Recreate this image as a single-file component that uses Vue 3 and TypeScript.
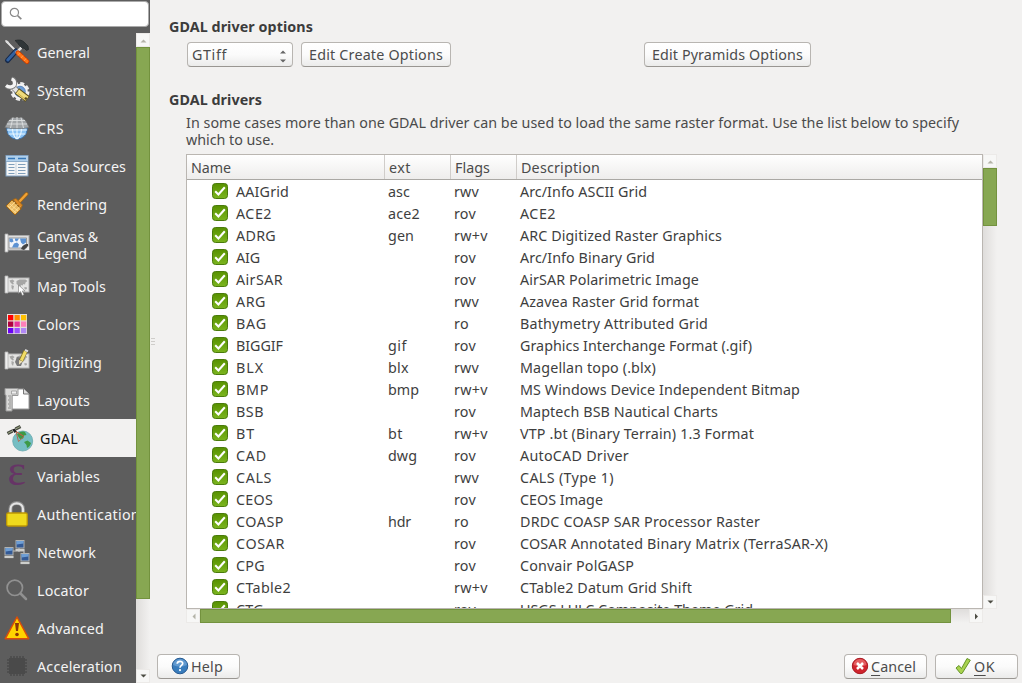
<script setup lang="ts">
import type { Directive } from 'vue'

interface Page { name: string; icon: string; w: number; second?: string; w2?: number }
interface Driver { name: string; w: number; ext: string; flags: string; desc: string; dw: number }

const pages: Page[] = [
  { name: 'General', icon: 'general', w: 53 },
  { name: 'System', icon: 'system', w: 49 },
  { name: 'CRS', icon: 'crs', w: 27 },
  { name: 'Data Sources', icon: 'data', w: 89 },
  { name: 'Rendering', icon: 'render', w: 70 },
  { name: 'Canvas &', icon: 'canvas', w: 61, second: 'Legend', w2: 50 },
  { name: 'Map Tools', icon: 'map', w: 69 },
  { name: 'Colors', icon: 'colors', w: 43 },
  { name: 'Digitizing', icon: 'digit', w: 65 },
  { name: 'Layouts', icon: 'layouts', w: 53 },
  { name: 'GDAL', icon: 'gdal', w: 38 },
  { name: 'Variables', icon: 'vars', w: 63 },
  { name: 'Authentication', icon: 'auth', w: 103 },
  { name: 'Network', icon: 'network', w: 59 },
  { name: 'Locator', icon: 'locator', w: 52 },
  { name: 'Advanced', icon: 'advanced', w: 67 },
  { name: 'Acceleration', icon: 'accel', w: 85 },
]

const d = (name: string, w: number, ext: string, flags: string, desc: string, dw: number): Driver =>
  ({ name, w, ext, flags, desc, dw })

const drivers: Driver[] = [
  d('AAIGrid', 53, 'asc', 'rwv', 'Arc/Info ASCII Grid', 127),
  d('ACE2', 36, 'ace2', 'rov', 'ACE2', 36),
  d('ADRG', 40, 'gen', 'rw+v', 'ARC Digitized Raster Graphics', 202),
  d('AIG', 24, '', 'rov', 'Arc/Info Binary Grid', 135),
  d('AirSAR', 47, '', 'rov', 'AirSAR Polarimetric Image', 179),
  d('ARG', 30, '', 'rwv', 'Azavea Raster Grid format', 179),
  d('BAG', 31, '', 'ro', 'Bathymetry Attributed Grid', 188),
  d('BIGGIF', 47, 'gif', 'rov', 'Graphics Interchange Format (.gif)', 232),
  d('BLX', 28, 'blx', 'rwv', 'Magellan topo (.blx)', 136),
  d('BMP', 33, 'bmp', 'rw+v', 'MS Windows Device Independent Bitmap', 280),
  d('BSB', 28, '', 'rov', 'Maptech BSB Nautical Charts', 198),
  d('BT', 19, 'bt', 'rw+v', 'VTP .bt (Binary Terrain) 1.3 Format', 234),
  d('CAD', 31, 'dwg', 'rov', 'AutoCAD Driver', 109),
  d('CALS', 36, '', 'rwv', 'CALS (Type 1)', 94),
  d('CEOS', 37, '', 'rov', 'CEOS Image', 83),
  d('COASP', 48, 'hdr', 'ro', 'DRDC COASP SAR Processor Raster', 240),
  d('COSAR', 49, '', 'rov', 'COSAR Annotated Binary Matrix (TerraSAR-X)', 308),
  d('CPG', 29, '', 'rov', 'Convair PolGASP', 114),
  d('CTable2', 55, '', 'rw+v', 'CTable2 Datum Grid Shift', 172),
  d('CTG', 28, '', 'rov', 'USGS LULC Composite Theme Grid', 233),
]

const extWidth: Record<string, number> = {
  asc: 22, ace2: 32, gen: 26, gif: 19, blx: 21, bmp: 31, bt: 15, dwg: 29, hdr: 23,
}
const flagWidth: Record<string, number> = { rwv: 25, rov: 22, 'rw+v': 34, ro: 15 }

const swatches = ['#f00', '#ff8f00', '#ffc000', '#b00040', '#e8359b', '#ff80b8', '#6a00f5', '#9a50ff', '#b088f5']

// Tracks a label so that it occupies the given advance width.
const vFit: Directive<HTMLElement, number | undefined> = {
  mounted(el, { value }) {
    const n = (el.textContent ?? '').trim().length
    if (!value || !n) return
    const natural = el.getBoundingClientRect().width
    el.style.letterSpacing = `${(value - natural) / n}px`
  },
}
</script>

<template>
  <div class="dialog">
    <aside class="side">
      <div class="search">
        <svg width="14" height="14" viewBox="0 0 14 14"><circle cx="5.4" cy="5.4" r="4.1" fill="none" stroke="#888" stroke-width="1.2" /><path d="M8.5 8.5L12.3 12.2" stroke="#888" stroke-width="1.7" /></svg>
      </div>
      <div class="side-body">
        <nav class="pages">
          <div v-for="p in pages" :key="p.name" class="page" :class="{ tall: p.second, active: p.icon === 'gdal' }">
            <svg class="pic" width="26" height="26" viewBox="0 0 26 26">
              <g v-if="p.icon === 'general'">
                <path d="M2 2L16 16" stroke="#e8e8e8" stroke-width="1.8" />
                <path d="M1 1l3 1 2 3-1 .5-3-2z" fill="#ddd" />
                <path d="M12 12L3.5 21.5" stroke="#16294a" stroke-width="5" stroke-linecap="round" />
                <path d="M12 12L3.8 21" stroke="#34629f" stroke-width="3" stroke-linecap="round" />
                <path d="M19 7L12 14" stroke="#ddd" stroke-width="2.5" />
                <path d="M11 1.500c4-1 7-.6 9 1.500l4 4 .5 3.500-2 1-2.500-2.500-1.500.5-4-4c-1-2-2-2.500-3.500-4z" fill="#303638" stroke="#1f2527" stroke-width=".7" />
                <path d="M14 14L23 22.500" stroke="#c63b00" stroke-width="5" stroke-linecap="round" />
                <path d="M14 14L23 22.500" stroke="#ff7414" stroke-width="3.200" stroke-linecap="round" />
                <path d="M14 16.500l2-2.500M17 19l2-2.500M20 22l2-2.500" stroke="#ffa45b" stroke-width=".8" />
              </g>
              <g v-else-if="p.icon === 'system'">
                <circle cx="16" cy="14.500" r="8.200" fill="none" stroke="#eee" stroke-width="2.600" stroke-dasharray="4 2.440" />
                <circle cx="16" cy="14.500" r="6.600" fill="#6d9dd6" stroke="#f2f2f2" stroke-width="2.300" />
                <circle cx="16" cy="14.500" r="5.300" fill="none" stroke="#4f79ad" stroke-width=".7" />
                <path d="M8 9L14 15" stroke="#777" stroke-width="5.600" />
                <path d="M8 9L14 15" stroke="#e6e6e6" stroke-width="4.200" />
                <path d="M2 9c4 3 9 1 9-3 0-2-1-4-3-4.500" fill="none" stroke="#777" stroke-width="4.200" />
                <path d="M2 8.500c4 3 9 1 8.500-2.500C10.500 4 9.500 2.500 7.500 2" fill="none" stroke="#f4f4f4" stroke-width="3.300" />
                <path d="M13 14L23.500 22" stroke="#5b4d18" stroke-width="7" />
                <path d="M13.500 14.500L23 21.700" stroke="#f1dc7b" stroke-width="5.200" />
                <path d="M14 16.500L21 22" stroke="#cdb24e" stroke-width="1" />
                <circle cx="21.800" cy="21.500" r="1.200" fill="#554820" />
              </g>
              <g v-else-if="p.icon === 'crs'">
                <circle cx="13" cy="14" r="10.200" fill="#8dc4f5" stroke="#3e75ad" />
                <path d="M3 15h20M4.500 19h17M13 10v14M8.500 11c-.5 6 1 10 4 13M17.500 11c.5 6-1 10-4 13" fill="none" stroke="#e8f6ff" stroke-width="1.100" />
                <path d="M8 2.500L18 2.500L22 6L25.300 12.500L19 13.500L7 13.500L.7 12.500L4 6Z" fill="#a0a4a7" stroke="#666" stroke-width=".6" />
                <path d="M5 5.500h16M3 9h20M9 2.500L6.500 13M13 2v11M17 2.500L19.500 13" stroke="#dfe1e2" stroke-width=".9" />
              </g>
              <g v-else-if="p.icon === 'data'">
                <rect x="2" y="2.500" width="22" height="20.500" fill="#f5f6f7" stroke="#7f9fc0" />
                <rect x="2.500" y="3" width="21" height="5.500" fill="#afd0ed" />
                <path d="M4 5.500h7M14 5.500h8" stroke="#3878b8" stroke-width="1.500" />
                <path d="M2 8.500h22" stroke="#8dacca" />
                <path d="M4.500 11.500h6M14 11.500h7.500M4.500 14.500h6M14 14.500h7.500M4.500 17.500h6M14 17.500h7.500M4.500 20.500h6M14 20.500h7.500" stroke="#819fbb" stroke-width="1.100" />
                <path d="M12 9.500v13" stroke="#c8d2dc" stroke-width="1" />
              </g>
              <g v-else-if="p.icon === 'render'">
                <path d="M14 12L22.500 3" stroke="#9c6417" stroke-width="4" stroke-linecap="round" />
                <path d="M14 12L22.500 3" stroke="#f1a235" stroke-width="2.400" stroke-linecap="round" />
                <path d="M8 9L17 18L11 24L2 15Z" fill="#e9b75f" stroke="#9c6417" />
                <path d="M9 8.500l3-1 6.500 6.500-1.500 3.500z" fill="#dc8825" stroke="#9c6417" stroke-width=".8" />
                <path d="M4 15l8 7M6 13l8 7M5 17l6-6M7.500 19l6-6M10 21.500l6-6" stroke="#ffe3a0" stroke-width=".8" />
              </g>
              <g v-else-if="p.icon === 'canvas'">
                <rect x="3" y="4.500" width="22" height="14.500" fill="#dedede" stroke="#aaa" />
                <rect x="5" y="7" width="17.500" height="10" fill="#f0f4fa" stroke="#777" stroke-width=".7" />
                <path d="M5.500 7.500h3l1 3-2 1-2-1zM11 7.500h4l-2 3-2-1zM16 7.500h6v4l-3 2-2-2zM8 16.500l2-4 3-1 2 2-1 3z" fill="#5b91d2" />
                <path d="M17 18c1-3 3-5 7-5v2l-4 4z" fill="#444" />
                <path d="M21 19l4-4v4z" fill="#eee" />
                <path d="M1 3h3v18H1z" fill="#f3f3f3" stroke="#aaa" stroke-width=".8" />
              </g>
              <g v-else-if="p.icon === 'map' || p.icon === 'digit'">
                <rect x="3" y="5" width="22" height="14" fill="#e4e4e3" stroke="#b3b3b3" />
                <path d="M5.500 7.500l3-1 2 1.500-1.500 1.500 1 1.500-1.500.5-2-2zM7.500 12l2.500 1-1 4-1.500-2zM12.500 8l3-1.500h6l2 1.500-2 1.500-.5 2-1.500-.5-1 1.500-1.500-.5-1 3.500-1.500-1-.5-2.500-1.500-1zM20 14.500l2.500-.5.5 2-2 .5z" fill="#a6a6a5" />
                <path d="M1 3h3v17H1z" fill="#eee" stroke="#b3b3b3" stroke-width=".8" />
                <path v-if="p.icon === 'map'" d="M14.500 12v8.500l2.100-1.900 1.700 3.900 1.700-.8-1.700-3.700h2.800z" fill="#fff" stroke="#777" stroke-width=".6" />
                <g v-else>
                  <path d="M13 8l7 1-3 8h-4l-2-4z" fill="#797979" />
                  <path d="M21.500 2L17 12" stroke="#7f702a" stroke-width="4.300" />
                  <path d="M21.500 2.500L17.300 11.500" stroke="#f2dd65" stroke-width="3" />
                  <path d="M21 1l3 1.400" stroke="#ddd" stroke-width="2" />
                  <path d="M15.200 11l3.500 1.500-3.700 3z" fill="#eee1b7" />
                </g>
              </g>
              <g v-else-if="p.icon === 'colors'">
                <rect x="3" y="3" width="20" height="20" fill="#e4dfd9" />
                <rect v-for="(c, i) in swatches" :key="c" :x="4 + (i % 3) * 6.5" :y="4 + Math.floor(i / 3) * 6.5" width="5.300" height="5.300" :fill="c" />
              </g>
              <g v-else-if="p.icon === 'layouts'">
                <path d="M8 2h12l5 5v15H8z" fill="#fff" stroke="#999" />
                <path d="M19.500 2v5H25" fill="#ddd" stroke="#777" />
                <path d="M1 1.500h13v7H8v15.500H2V8H1z" fill="#d9d9d8" stroke="#999" />
                <path d="M7.500 4h5v3h-5z" fill="#eee" stroke="#999" stroke-width=".8" />
                <path d="M4 9h3M5 11h2M4 13h3M5 15h2M4 17h3M5 19h2M4 21h3" stroke="#888" stroke-width=".9" />
              </g>
              <g v-else-if="p.icon === 'gdal'" transform="translate(0 -.5)">
                <circle cx="15.700" cy="16.500" r="10" fill="#75bec3" stroke="#67a7ad" stroke-width=".8" />
                <path d="M10 10c2-3 6-3.500 8-2.500l1.500 3-2.500.5-1 3-3 .5-1.500-2zM17 17.500l3.500-1.500 3.500 2.500c-1 3-2 4-4 5l-.5-3z" fill="#3d9a46" />
                <path d="M9 7l2.500 10 5.500-5zM9 7l8 5" fill="none" stroke="#b86044" stroke-width=".9" />
                <path d="M.5 9L5.500 6.500M8.500 4.500L13.500 2" stroke="#494e42" stroke-width="3.400" />
                <path d="M1 8.700L5.200 6.600M8.800 4.300L13 2.200" stroke="#9aa181" stroke-width="1" />
                <path d="M5 5l3-1 1.500 3-2 1.500z" fill="#222" />
              </g>
              <text v-else-if="p.icon === 'vars'" x="3.500" y="22" class="epsilon">ε</text>
              <g v-else-if="p.icon === 'auth'">
                <path d="M6.500 13V8c0-8 12.500-8 12.500 0v5" fill="none" stroke="#888" stroke-width="4" />
                <path d="M6.500 13V8c0-7.500 12.500-7.500 12.500 0v5" fill="none" stroke="#e5e5e5" stroke-width="2.200" />
                <rect x="2.700" y="12" width="20.500" height="13" rx="1.500" fill="#efda1d" stroke="#bd9704" stroke-width="1.300" />
              </g>
              <g v-else-if="p.icon === 'network'">
                <path d="M5 15V12h15v5M15 8v5" fill="none" stroke="#c6c6c6" stroke-width="1.200" />
                <g v-for="q in [[0.5, 8], [11.500, 1], [16.500, 14]]" :key="q[0]" :transform="`translate(${q[0]} ${q[1]})`">
                  <rect x=".5" y=".5" width="8" height="7.500" fill="#335a96" stroke="#b0b2b2" />
                  <path d="M1 1h7v2.500L1 4.500z" fill="#6e9ed4" />
                  <path d="M0 9h9v2H0z" fill="#dadbd7" stroke="#999" stroke-width=".4" />
                </g>
              </g>
              <g v-else-if="p.icon === 'locator'">
                <circle cx="10.800" cy="10.800" r="7.700" fill="none" stroke="#919191" stroke-width="1.700" />
                <path d="M16.500 16.500L22 22" stroke="#919191" stroke-width="2.500" stroke-linecap="round" />
              </g>
              <g v-else-if="p.icon === 'advanced'">
                <path d="M13 2L24.700 23.700H1.300Z" fill="#ffd300" stroke="#d84c0b" stroke-width="1.500" stroke-linejoin="round" />
                <path d="M11 8h4l-1 8h-2z" fill="#8b3607" /><circle cx="13" cy="19.500" r="1.800" fill="#8b3607" />
              </g>
              <g v-else>
                <path d="M7 3v20M10 3v20M13 3v20M16 3v20M19 3v20M3 7h20M3 10h20M3 13h20M3 16h20M3 19h20" stroke="#494949" stroke-width="1.400" />
                <rect x="5" y="5" width="16" height="16" fill="#4a4a4a" />
              </g>
            </svg>
            <div class="names">
              <div><span v-fit="p.w">{{ p.name }}</span></div>
              <div v-if="p.second"><span v-fit="p.w2">{{ p.second }}</span></div>
            </div>
          </div>
        </nav>
        <div class="vbar side-bar">
          <i class="cap"><svg width="14" height="14"><path d="M4.500 9.500h6L7.500 6.500z" fill="#b4b3a8" /></svg></i>
          <i class="thumb"></i>
          <i class="rest"></i>
          <i class="cap"><svg width="14" height="14"><path d="M4.500 5.500h6L7.500 8.500z" fill="#4c4c43" /></svg></i>
        </div>
      </div>
    </aside>

    <div class="grip"><i></i><i></i><i></i></div>

    <main class="main">
      <h2 class="head"><span v-fit="144">GDAL driver options</span></h2>
      <div class="options">
        <div class="btn select"><span v-fit="35">GTiff</span>
          <svg width="8" height="14" viewBox="0 0 8 14"><path d="M1 4.500h6L4 1.500zM1 10.500h6L4 13.500z" fill="#666" /></svg>
        </div>
        <div class="btn create"><span v-fit="134">Edit Create Options</span></div>
        <div class="btn pyramids"><span v-fit="151">Edit Pyramids Options</span></div>
      </div>
      <h2 class="head drivers-head"><span v-fit="93">GDAL drivers</span></h2>
      <div class="note">
        <div><span v-fit="773">In some cases more than one GDAL driver can be used to load the same raster format. Use the list below to specify</span></div>
        <div><span v-fit="88">which to use.</span></div>
      </div>

      <div class="list">
        <div class="table">
          <div class="thead">
            <div><span v-fit="40">Name</span></div>
            <div><span v-fit="22">ext</span></div>
            <div><span v-fit="35">Flags</span></div>
            <div><span v-fit="79">Description</span></div>
          </div>
          <div class="rows">
            <div v-for="r in drivers" :key="r.name" class="row">
              <div class="name">
                <svg width="16" height="16" viewBox="0 0 16 16">
                  <defs><linearGradient id="tick" x2="0" y2="1"><stop stop-color="#579000" /><stop offset="1" stop-color="#7bb51f" /></linearGradient></defs>
                  <rect x=".5" y=".5" width="15" height="15" rx="3" fill="url(#tick)" stroke="#4a7b0c" />
                  <path d="M3.200 8.200L6.400 11.400L12.800 4.200" fill="none" stroke="#fff" stroke-width="2.100" />
                </svg>
                <span v-fit="r.w">{{ r.name }}</span>
              </div>
              <div><span v-fit="extWidth[r.ext]">{{ r.ext }}</span></div>
              <div><span v-fit="flagWidth[r.flags]">{{ r.flags }}</span></div>
              <div><span v-fit="r.dw">{{ r.desc }}</span></div>
            </div>
          </div>
        </div>
        <div class="vbar list-vbar">
          <i class="cap"><svg width="14" height="14"><path d="M4.500 9.500h6L7.500 6.500z" fill="#b4b3a8" /></svg></i>
          <i class="thumb"></i>
          <i class="rest"></i>
          <i class="cap"><svg width="14" height="14"><path d="M4.500 5.500h6L7.500 8.500z" fill="#4c4c43" /></svg></i>
        </div>
        <div class="hbar">
          <i class="cap"><svg width="14" height="14"><path d="M9.500 4.500v6L6.500 7.500z" fill="#b4b3a8" /></svg></i>
          <i class="thumb"></i>
          <i class="rest"></i>
          <i class="cap"><svg width="14" height="14"><path d="M6 4.500v6L9 7.500z" fill="#4c4c43" /></svg></i>
        </div>
      </div>

      <footer class="foot">
        <div class="btn help">
          <svg width="18" height="18" viewBox="0 0 18 18">
            <circle cx="9" cy="9" r="7.800" fill="#387cbc" stroke="#275a91" /><path d="M2 8a7 6 0 0 1 14 0q-7 3-14 0z" fill="#73a7d8" opacity=".7" />
            <path d="M6.200 6.800c.2-3.400 5.600-3.200 5.500-.2 0 1.700-2.700 2-2.700 4.100" fill="none" stroke="#fff" stroke-width="1.700" /><circle cx="9" cy="13.100" r="1.100" fill="#fff" />
          </svg>
          <span v-fit="32">Help</span>
        </div>
        <div class="btn cancel">
          <svg width="18" height="18" viewBox="0 0 18 18">
            <circle cx="9" cy="9" r="7.700" fill="#cf242d" stroke="#a81922" /><path d="M2.500 8a6.500 6 0 0 1 13 0q-6 2.500-13 0z" fill="#ec7778" opacity=".7" />
            <path d="M6 6l6 6M12 6l-6 6" stroke="#fff" stroke-width="2.500" />
          </svg>
          <span v-fit="45"><u>C</u>ancel</span>
        </div>
        <div class="btn ok">
          <svg width="18" height="18" viewBox="0 0 18 18"><path d="M2 11l3-2.500 2.500 3L13 1.500l3.300 1.700L8 16.500H6.500z" fill="#a9d350" stroke="#659428" stroke-linejoin="round" /></svg>
          <span v-fit="21"><u>O</u>K</span>
        </div>
      </footer>
    </main>
  </div>
</template>

<style>
html, body { margin: 0; overflow: hidden; background: #f2f1f0; }
</style>

<style scoped>
.dialog {
  display: flex;
  width: 1022px;
  height: 683px;
  overflow: hidden;
  background: #f2f1f0;
  color: #4b4b4b;
  font: 14.3px/17px "Noto Sans", "Open Sans", sans-serif;
  white-space: nowrap;
}
.dialog * { box-sizing: border-box; }
svg { display: block; flex: none; }
span { display: inline-block; }
i { display: block; }

.side { width: 150px; display: flex; flex-direction: column; background: #5d5d5d; flex: none; }
.search {
  height: 26px; margin: 1px 1px 6px; padding: 5px 7px;
  background: #fff; border: 1px solid #aaa; border-radius: 4px;
}
.side-body { display: flex; height: 650px; }
.pages { width: 136px; overflow: hidden; color: #f4f4f4; }
.page { height: 38px; display: flex; align-items: center; padding-left: 4px; }
.page.tall { height: 44px; }
.page.tall .names { padding: 0 0 1px; }
.page.tall .pic { margin-top: -2px; }
.page.active { background: #f2f1f0; color: #111; padding-left: 7px; }
.pic { overflow: visible; }
.names { margin-left: 7px; padding-top: 1px; }
.epsilon { font: 44px "Liberation Serif", serif; fill: #663466; }

.vbar { width: 14px; display: flex; flex-direction: column; background: linear-gradient(90deg, #dfdddb, #f2f1f0); }
.hbar { height: 14px; display: flex; background: linear-gradient(#dfdddb, #f2f1f0); }
.cap { width: 14px; height: 14px; flex: none; background: #f7f7f6; border: 1px solid #eceae8; }
.cap svg { margin: -1px; }
.thumb { flex: none; background: #87a752; border: 1px solid #73923e; }
.rest { flex: 1; }
.side-bar .thumb { height: 552px; }
.list-vbar .thumb { height: 58px; }
.hbar .thumb { width: 751px; }

.grip { width: 7px; padding: 338px 1px 0; flex: none; }
.grip i { height: 1px; width: 4px; background: #cfcdca; margin-bottom: 2px; }

.main { flex: 1; }
.head { margin: 18px 0 0 12px; font-size: 14.3px; line-height: 18px; font-weight: 700; color: #3c3c3c; }
.options { display: flex; margin: 6px 0 0 30px; height: 25px; }
.btn {
  height: 25px; display: flex; align-items: center; justify-content: center;
  background: linear-gradient(#fff, #fbfbfb 50%, #ebebea);
  border: 1px solid #b8b5b1; border-bottom-color: #999692; border-radius: 4px; color: #4c4c4c;
}
.select { width: 106px; justify-content: space-between; padding: 0 5px 0 4px; }
.select svg { margin-top: 3px; }
.create { width: 150px; margin-left: 8px; }
.pyramids { width: 167px; margin-left: 193px; }
.drivers-head { margin-top: 24px; }
.note { margin: 5px 0 0 29px; }
.list { display: grid; grid-template: 455px 14px / 797px 14px; margin: 6px 0 0 29px; }
.table { background: #fff; border: 1px solid #bab6b1; overflow: hidden; }
.thead {
  height: 25px; display: grid; grid-template-columns: 198px 66px 66px 1fr;
  background: linear-gradient(#fff, #eeedec); border-bottom: 1px solid #aaa8a4;
}
.thead div { padding: 4px 0 0 4px; border-right: 1px solid #d0cdca; }
.thead div:last-child { border-right: 0; }
.row { height: 22px; display: grid; grid-template-columns: 201px 66px 66px 1fr; align-items: center; color: #3e3e3e; }
.name { display: flex; align-items: center; gap: 8px; padding-left: 25px; }
.foot { display: flex; margin: 31px 4px 0 0; }
.help { width: 83px; justify-content: flex-start; padding-left: 13px; gap: 2px; }
.cancel { width: 83px; margin-left: auto; justify-content: flex-start; padding-left: 6px; gap: 2px; }
.ok { width: 83px; margin-left: 8px; justify-content: flex-start; padding-left: 18px; gap: 2px; }
.btn.help svg, .btn.cancel svg, .btn.ok svg { margin-top: -1px; }
u { text-underline-offset: 3px; text-decoration-thickness: 1px; }
</style>
